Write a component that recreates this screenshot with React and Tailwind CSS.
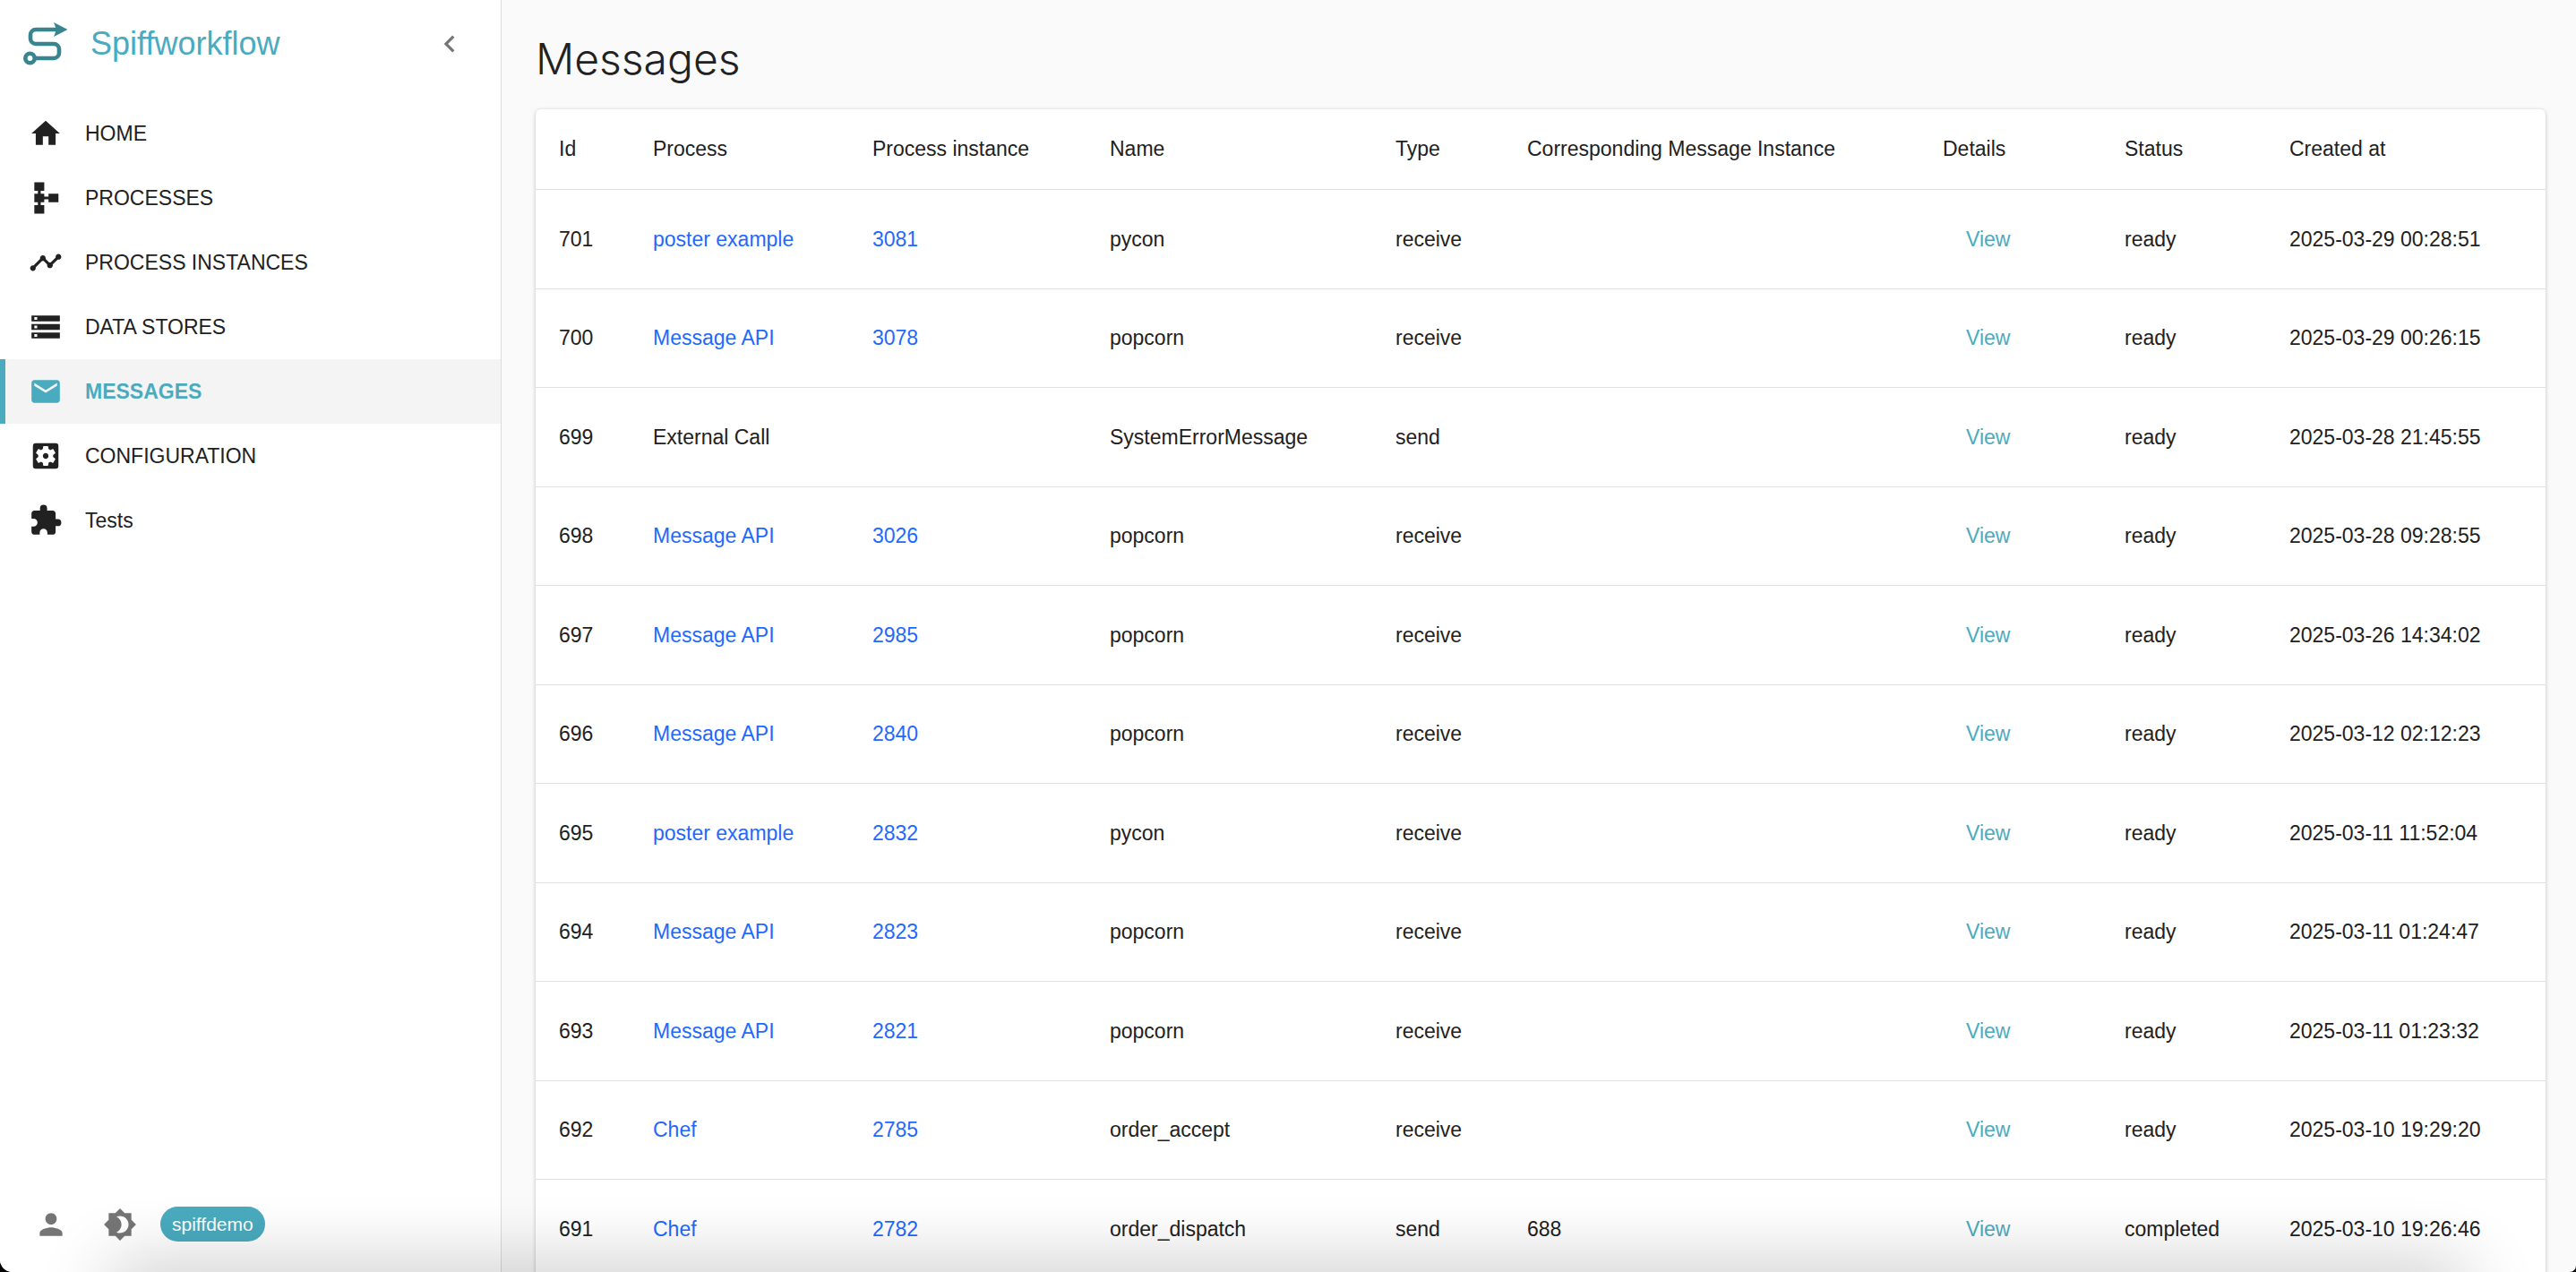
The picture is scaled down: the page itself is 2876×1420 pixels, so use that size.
import React from "react";
import {
  MdHome,
  MdSchema,
  MdTimeline,
  MdStorage,
  MdMail,
  MdSettingsApplications,
  MdExtension,
  MdPerson,
  MdBrightness4,
  MdChevronLeft,
} from "react-icons/md";

const navItems = [
  { label: "HOME", Icon: MdHome },
  { label: "PROCESSES", Icon: MdSchema },
  { label: "PROCESS INSTANCES", Icon: MdTimeline },
  { label: "DATA STORES", Icon: MdStorage },
  { label: "MESSAGES", Icon: MdMail, active: true },
  { label: "CONFIGURATION", Icon: MdSettingsApplications },
  { label: "Tests", Icon: MdExtension },
];

const columns = [
  { label: "Id", width: "w-[105px]" },
  { label: "Process", width: "w-[245px]" },
  { label: "Process instance", width: "w-[265px]" },
  { label: "Name", width: "w-[319px]" },
  { label: "Type", width: "w-[147px]" },
  { label: "Corresponding Message Instance", width: "w-[464px]" },
  { label: "Details", width: "w-[203px]" },
  { label: "Status", width: "w-[184px]" },
  { label: "Created at", width: "w-[312px]" },
];

const messages = [
  ["701", "poster example", "3081", "pycon", "receive", "", "ready", "2025-03-29 00:28:51"],
  ["700", "Message API", "3078", "popcorn", "receive", "", "ready", "2025-03-29 00:26:15"],
  ["699", "External Call", "", "SystemErrorMessage", "send", "", "ready", "2025-03-28 21:45:55"],
  ["698", "Message API", "3026", "popcorn", "receive", "", "ready", "2025-03-28 09:28:55"],
  ["697", "Message API", "2985", "popcorn", "receive", "", "ready", "2025-03-26 14:34:02"],
  ["696", "Message API", "2840", "popcorn", "receive", "", "ready", "2025-03-12 02:12:23"],
  ["695", "poster example", "2832", "pycon", "receive", "", "ready", "2025-03-11 11:52:04"],
  ["694", "Message API", "2823", "popcorn", "receive", "", "ready", "2025-03-11 01:24:47"],
  ["693", "Message API", "2821", "popcorn", "receive", "", "ready", "2025-03-11 01:23:32"],
  ["692", "Chef", "2785", "order_accept", "receive", "", "ready", "2025-03-10 19:29:20"],
  ["691", "Chef", "2782", "order_dispatch", "send", "688", "completed", "2025-03-10 19:26:46"],
];

function Logo() {
  return (
    <svg viewBox="0 0 50 54" className="h-[54px] w-[50px] shrink-0" fill="none" aria-hidden="true">
      <path
        d="M37 11H14A6 6 0 0 0 8 17V21A6 6 0 0 0 14 27H34A6 6 0 0 1 40 33V37A6 6 0 0 1 34 43H13"
        stroke="#38848f"
        strokeWidth="4.6"
      />
      <path d="M34 3L49.500 11L34 19L37 11Z" fill="#38848f" />
      <circle cx="7.500" cy="43" r="5.200" stroke="#38848f" strokeWidth="4.600" />
    </svg>
  );
}

function Sidebar() {
  return (
    <aside className="flex w-[560px] shrink-0 flex-col border-r border-[#dcdcdc] bg-white">
      <div className="flex h-[98px] items-center pr-[38px] pl-[26px]">
        <Logo />
        <span className="ml-[25px] flex-1 text-[36px] leading-[48px] text-[#4aabbf]">Spiffworkflow</span>
        <button type="button" aria-label="Collapse menu" className="text-[#757575]">
          <MdChevronLeft className="size-[38px]" />
        </button>
      </div>
      <nav className="mt-[15px] flex flex-1 flex-col">
        {navItems.map(({ label, Icon, active }) => (
          <a
            key={label}
            href="#"
            aria-current={active ? "page" : undefined}
            className={
              active
                ? "flex h-[72px] items-center border-l-[6px] border-[#4aabbf] bg-[#f4f4f4] pl-[26px] font-bold text-[#4aabbf]"
                : "flex h-[72px] items-center pl-8"
            }
          >
            <Icon className="size-[38px]" />
            <span className="ml-[25px]">{label}</span>
          </a>
        ))}
      </nav>
      <div className="flex items-center pb-[34px] pl-[38px] text-[#757575]">
        <button type="button" aria-label="User">
          <MdPerson className="size-[38px]" />
        </button>
        <button type="button" aria-label="Toggle dark mode" className="ml-[39px]">
          <MdBrightness4 className="size-[38px]" />
        </button>
        <span className="ml-[26px] rounded-full bg-[#4aabbf] px-[13px] text-[21px] leading-[39px] text-white">
          spiffdemo
        </span>
      </div>
    </aside>
  );
}

function MessageTable() {
  return (
    <div className="overflow-hidden rounded-t-md bg-white shadow-[0_1px_4px_rgba(0,0,0,0.25)]">
      <table className="w-full table-fixed border-collapse text-left">
        <thead>
          <tr className="h-[89px] border-b border-[#e0e0e0]">
            {columns.map(({ label, width }) => (
              <th key={label} scope="col" className={`${width} pl-[26px] font-normal whitespace-nowrap`}>
                {label}
              </th>
            ))}
          </tr>
        </thead>
        <tbody>
          {messages.map(([id, process, instance, name, type, related, status, created]) => (
            <tr key={id} className="border-b border-[#e0e0e0] odd:h-[111px] even:h-[110px]">
              <td className="pl-[26px]">{id}</td>
              <td className="pl-[26px]">
                {instance ? (
                  <a href="#" className="text-[#1f69ff]">
                    {process}
                  </a>
                ) : (
                  process
                )}
              </td>
              <td className="pl-[26px]">
                {instance && (
                  <a href="#" className="text-[#1f69ff]">
                    {instance}
                  </a>
                )}
              </td>
              <td className="pl-[26px]">{name}</td>
              <td className="pl-[26px]">{type}</td>
              <td className="pl-[26px]">{related}</td>
              <td className="pl-[52px]">
                <button type="button" className="text-[#4aabbf]">
                  View
                </button>
              </td>
              <td className="pl-[26px]">{status}</td>
              <td className="pl-[26px]">{created}</td>
            </tr>
          ))}
        </tbody>
      </table>
    </div>
  );
}

export default function App() {
  return (
    <div className="relative h-screen overflow-hidden bg-black">
      <div className="flex h-full overflow-hidden rounded-br-[7px] rounded-bl-[14px] bg-[#fafafa] font-['Liberation_Sans',Arial,sans-serif] text-[23px] leading-8 text-[#212121]">
        <Sidebar />
        <main className="min-w-0 flex-1 overflow-hidden pt-[34px] pr-[34px] pl-[38px]">
          <h1 className="mb-6 font-['Inter','Liberation_Sans',sans-serif] text-[48px] leading-[64px] font-light">
            Messages
          </h1>
          <MessageTable />
        </main>
      </div>
      <div className="pointer-events-none absolute right-[120px] -bottom-10 left-[120px] h-10 rounded-full shadow-[0_0_80px_rgba(0,0,0,0.32)]" />
    </div>
  );
}
